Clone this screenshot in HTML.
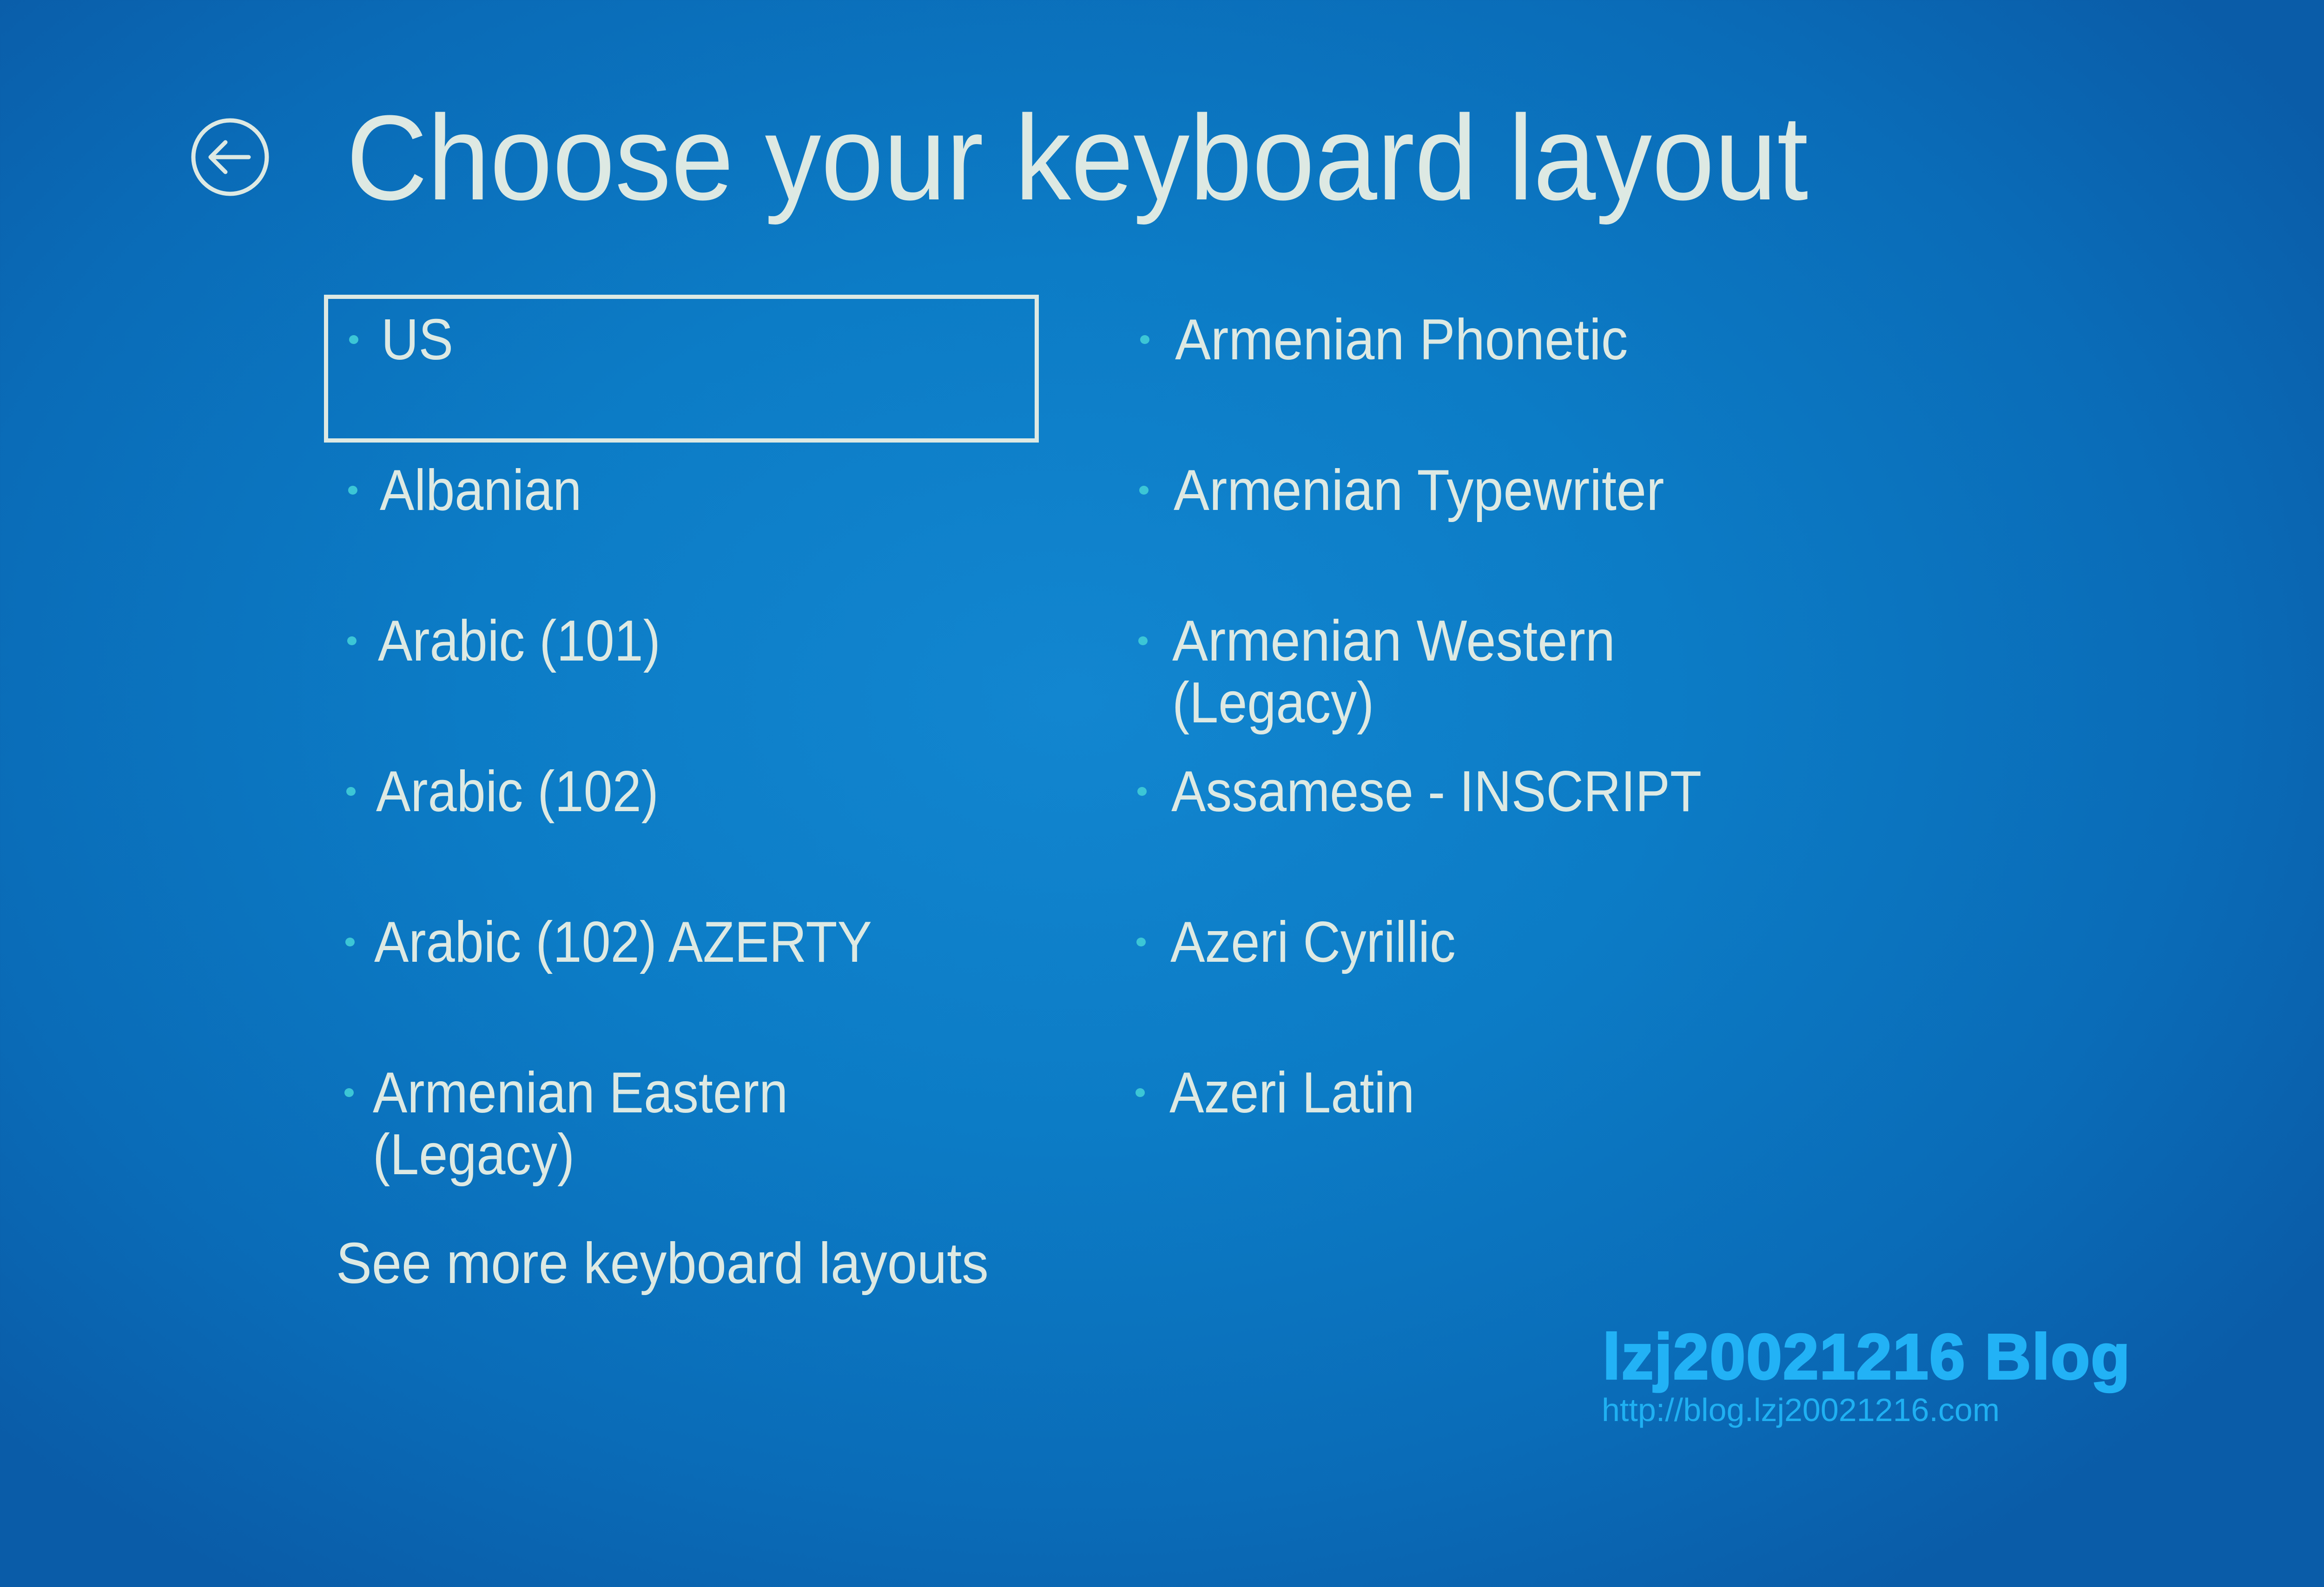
<!DOCTYPE html>
<html><head><meta charset="utf-8"><style>
html,body{margin:0;padding:0}
body{width:5082px;height:3414px;overflow:hidden;position:relative;
background:radial-gradient(ellipse 3200px 2300px at 2300px 1500px,#1286d0 0%,#0c7cc6 40%,#0a6cb8 75%,#0a5ca8 100%);
font-family:"Liberation Sans",sans-serif;color:#dde9e3}
.t{position:absolute;white-space:nowrap;line-height:1;transform-origin:0 0}
.title{font-size:260px;left:745px;top:210px;transform:scaleX(0.93)}
.it{font-size:124px;transform:scaleX(0.9)}
.b{position:absolute;width:20px;height:19px;border-radius:50%;background:#3cc6d6}
.box{position:absolute;left:697px;top:634px;width:1520px;height:300px;border:9px solid #dde9e3}
.wm{font-weight:bold;font-size:138px;color:#22b2f6;left:3448px;top:2850px;transform:scaleX(1.0);letter-spacing:2px;-webkit-text-stroke:4px #22b2f6}
.url{font-size:70px;color:#1fb0f2;left:3446px;top:2998px}
</style></head><body>
<svg style="position:absolute;left:405px;top:250px" width="180" height="180" viewBox="0 0 180 180">
<circle cx="90" cy="88" r="79" fill="none" stroke="#dde9e3" stroke-width="9"/>
<path d="M48 88 H130 M48 88 L80 56 M48 88 L80 120" fill="none" stroke="#dde9e3" stroke-width="9" stroke-linecap="round" stroke-linejoin="round"/>
</svg>
<div class="t title">Choose your keyboard layout</div>
<div class="box"></div>

<div class="b" style="left:751px;top:721px"></div><div class="t it" style="left:820px;top:669px">US</div>
<div class="b" style="left:749px;top:1045px"></div><div class="t it" style="left:817px;top:993px">Albanian</div>
<div class="b" style="left:747px;top:1369px"></div><div class="t it" style="left:813px;top:1317px">Arabic (101)</div>
<div class="b" style="left:745px;top:1693px"></div><div class="t it" style="left:809px;top:1641px">Arabic (102)</div>
<div class="b" style="left:743px;top:2017px"></div><div class="t it" style="left:805px;top:1965px">Arabic (102) AZERTY</div>
<div class="b" style="left:741px;top:2341px"></div><div class="t it" style="left:802px;top:2289px">Armenian Eastern</div>
<div class="t it" style="left:802px;top:2422px">(Legacy)</div>
<div class="t it" style="left:723px;top:2656px;transform:scaleX(0.93)">See more keyboard layouts</div>

<div class="b" style="left:2453px;top:721px"></div><div class="t it" style="left:2528px;top:669px;transform:scaleX(0.93)">Armenian Phonetic</div>
<div class="b" style="left:2451px;top:1045px"></div><div class="t it" style="left:2525px;top:993px;transform:scaleX(0.93)">Armenian Typewriter</div>
<div class="b" style="left:2449px;top:1369px"></div><div class="t it" style="left:2522px;top:1317px;transform:scaleX(0.93)">Armenian Western</div>
<div class="t it" style="left:2522px;top:1450px">(Legacy)</div>
<div class="b" style="left:2447px;top:1693px"></div><div class="t it" style="left:2520px;top:1641px">Assamese - INSCRIPT</div>
<div class="b" style="left:2445px;top:2017px"></div><div class="t it" style="left:2518px;top:1965px">Azeri Cyrillic</div>
<div class="b" style="left:2443px;top:2341px"></div><div class="t it" style="left:2516px;top:2289px">Azeri Latin</div>

<div class="t wm">lzj20021216 Blog</div>
<div class="t url">http://blog.lzj20021216.com</div>
</body></html>
